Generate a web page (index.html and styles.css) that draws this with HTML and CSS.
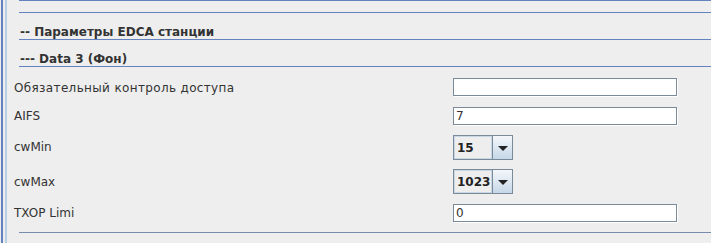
FILE: index.html
```html
<!DOCTYPE html>
<html>
<head>
  <title>Параметры EDCA станции</title>
  <link rel="stylesheet" href="styles.css">
</head>
<body>
  <div class="frame">
    <div class="frame-inner">
      <div class="rule"></div>
      <div class="rule rule-second"></div>
      <div class="section-title">-- Параметры EDCA станции</div>
      <div class="section-title">--- Data 3 (Фон)</div>

      <div class="form-grid">
        <label class="form-label form-label-wide" for="acm">Обязательный контроль доступа</label>
        <input class="text-field" type="text" id="acm" value="">

        <label class="form-label" for="aifs">AIFS</label>
        <input class="text-field" type="text" id="aifs" value="7">

        <label class="form-label">cwMin</label>
        <div class="combo">
          <span class="combo-value">15</span>
          <span class="combo-button"><span class="combo-arrow"></span></span>
        </div>

        <label class="form-label">cwMax</label>
        <div class="combo">
          <span class="combo-value">1023</span>
          <span class="combo-button"><span class="combo-arrow"></span></span>
        </div>

        <label class="form-label" for="txop">TXOP Limi</label>
        <input class="text-field" type="text" id="txop" value="0">
      </div>

      <div class="rule rule-bottom"></div>
    </div>
  </div>
</body>
</html>
```

FILE: styles.css
```css
html,
body {
  margin: 0;
  height: 100%;
  background-color: #eeeeee;
}

body {
  font-family: "DejaVu Sans", sans-serif;
  font-size: 12px;
  color: #333333;
}

.frame {
  height: 100%;
  margin-left: 1px;
  padding-left: 2px;
  border-left: 2px solid #6382bf;
}

.frame-inner {
  height: 100%;
  border-left: 2px solid #b8cfe5;
}

.rule {
  margin-left: 12px;
  border-top: 1px solid #6382bf;
}

.rule-second {
  margin-top: 11px;
}

.section-title {
  margin-left: 12px;
  padding-top: 12px;
  padding-left: 1px;
  line-height: 14px;
  font-weight: bold;
  border-bottom: 1px solid #6382bf;
}

.form-grid {
  display: grid;
  grid-template-columns: 446px 224px;
  grid-template-rows: 19px 18px 24px 25px 18px;
  row-gap: 10px;
  padding-top: 11px;
}

.form-label {
  align-self: center;
  padding-left: 7px;
  line-height: 14px;
}

.form-label-wide {
  letter-spacing: 0.35px;
}

.text-field {
  box-sizing: border-box;
  align-self: start;
  width: 224px;
  height: 18px;
  margin: 0;
  padding: 0 0 0 2px;
  border: 1px solid #7a8a99;
  box-shadow: 1px 1px 0 #ffffff;
  background-color: #ffffff;
  font-family: "DejaVu Sans", sans-serif;
  font-size: 12px;
  color: #333333;
  outline: none;
}

.combo {
  display: flex;
  align-self: start;
  box-sizing: border-box;
  width: 60px;
  height: 25px;
  border: 1px solid #7a8a99;
}

.combo-value {
  flex: 1;
  display: flex;
  align-items: center;
  padding-left: 2px;
  border: 1px solid #c8d7e6;
  font-weight: bold;
  color: #222222;
}

.combo-button {
  display: flex;
  align-items: center;
  justify-content: center;
  width: 19px;
  border-left: 1px solid #7a8a99;
  background: linear-gradient(#f4f7fa, #c6d7e8);
}

.combo-arrow {
  width: 0;
  height: 0;
  border-left: 5px solid transparent;
  border-right: 5px solid transparent;
  border-top: 5px solid #222222;
  margin-top: 1px;
}

.rule-bottom {
  margin-top: 10px;
  border-top-color: #7a8cae;
}
```
